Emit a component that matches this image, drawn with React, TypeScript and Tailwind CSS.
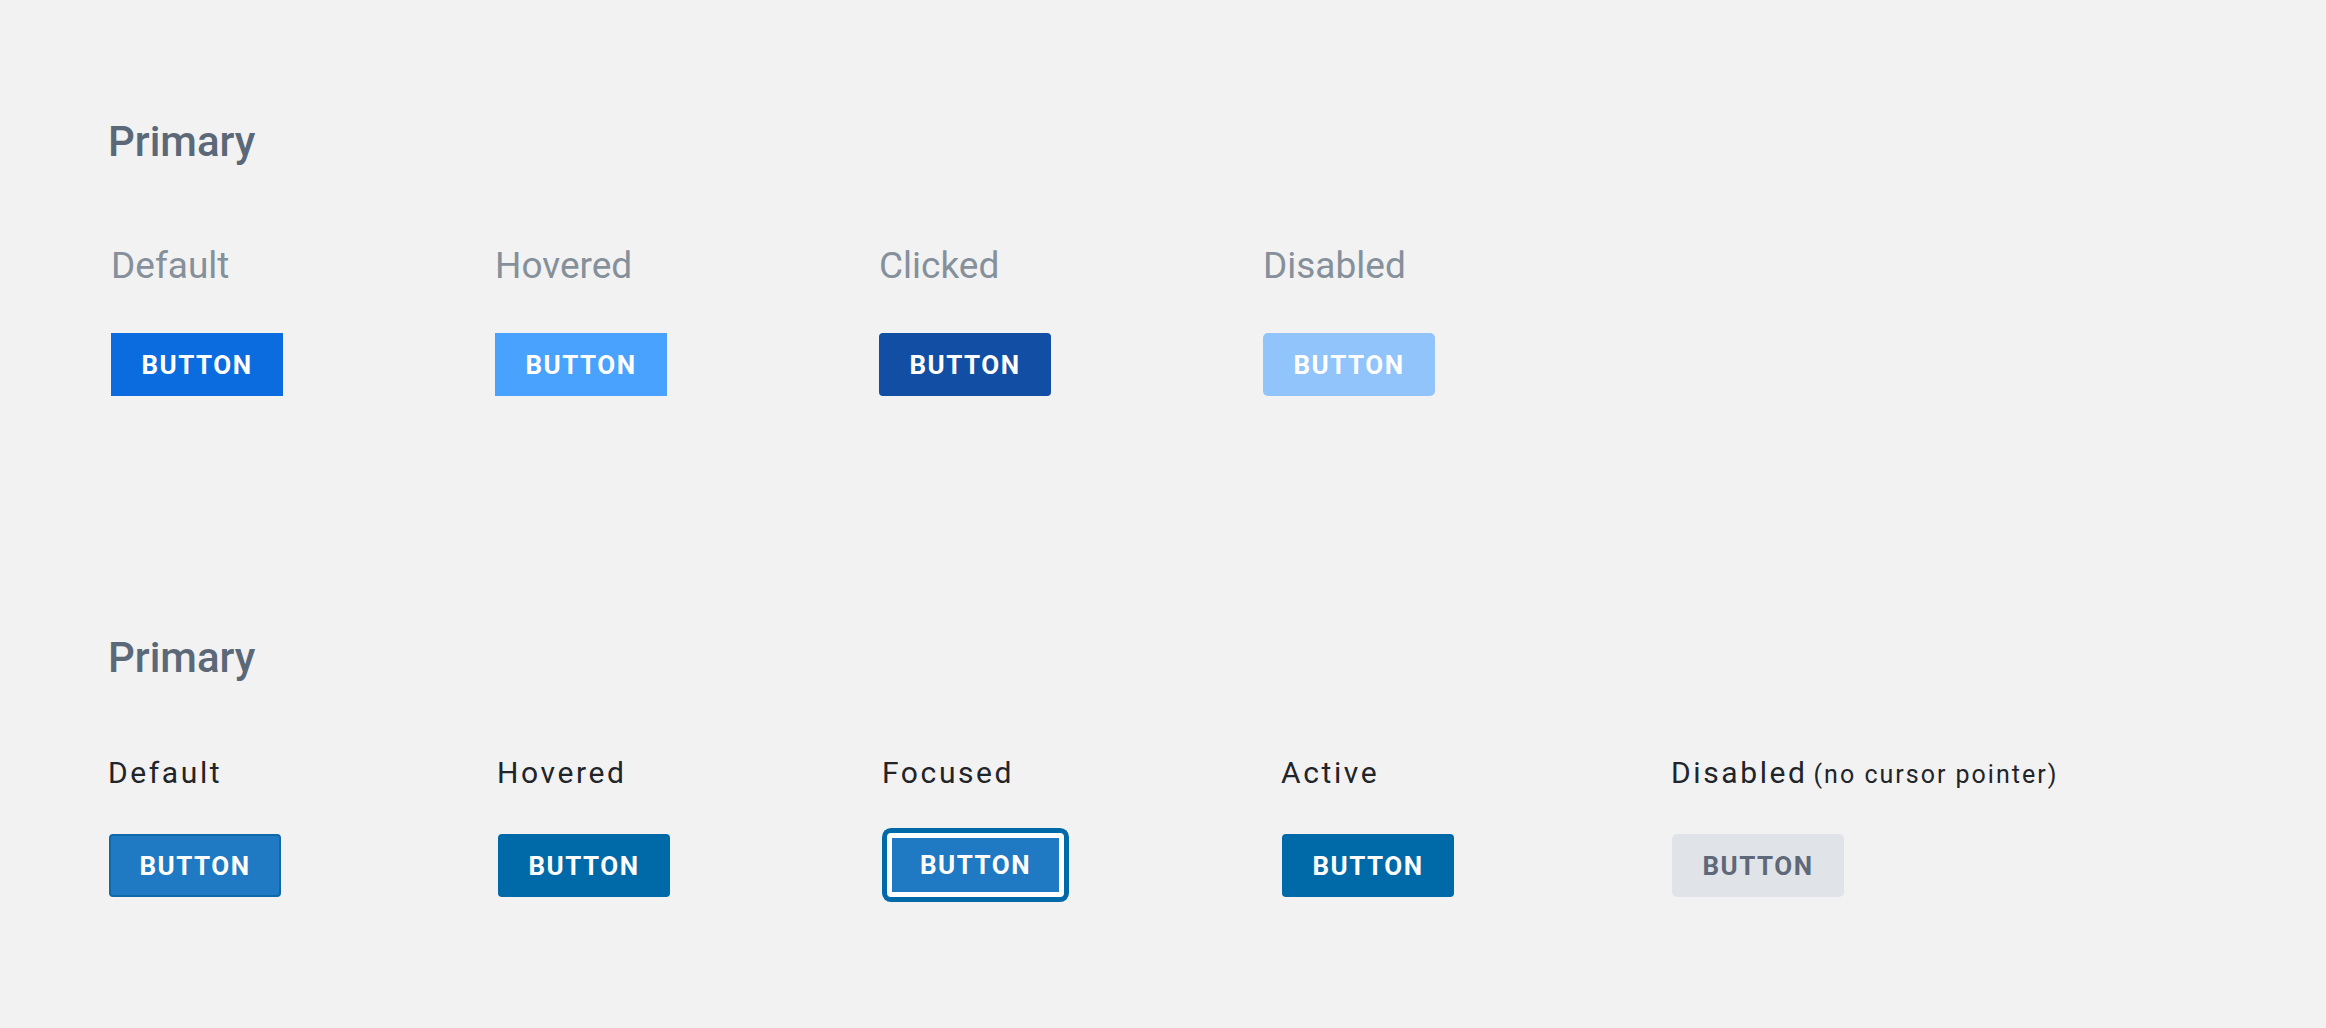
type Btn = {
  label: string;
  className: string;
};

const firstRow: Btn[] = [
  { label: "Default", className: "bg-[#0b6cdf] text-white" },
  { label: "Hovered", className: "bg-[#48a2fe] text-white" },
  { label: "Clicked", className: "rounded-[4px] bg-[#134ea5] text-white" },
  { label: "Disabled", className: "rounded-[5px] bg-[#90c4fb] text-white" },
];

function ButtonFace({ className }: { className: string }) {
  return (
    <div
      className={`flex items-center justify-center text-[26px] font-bold leading-none tracking-[1.5px] ${className}`}
    >
      BUTTON
    </div>
  );
}

export default function App() {
  return (
    <div className="min-h-screen bg-[#f2f2f2] pl-[108px] pt-[121px] font-['Roboto',sans-serif]">
      <h2 className="text-[42px] font-medium leading-none text-[#5b6878]">Primary</h2>

      <div className="mt-[84px] grid grid-cols-[384px_384px_384px_384px]">
        {firstRow.map((b) => (
          <div key={b.label} className="flex flex-col">
            <span className="ml-[3px] h-[36px] text-[37px] leading-none text-[#85909b]">{b.label}</span>
            <ButtonFace className={`ml-[3px] mt-[50px] h-[63px] w-[172px] ${b.className}`} />
          </div>
        ))}
      </div>

      <h2 className="mt-[241px] text-[42px] font-medium leading-none text-[#5b6878]">Primary</h2>

      <div className="mt-[79px] grid grid-cols-[389px_385px_399px_390px_auto] text-[30px] leading-none tracking-[2.6px] text-[#212429]">
        <div className="flex flex-col">
          <span>Default</span>
          <ButtonFace className="ml-px mt-[46px] h-[63px] w-[172px] rounded-[4px] border-2 border-[#0f68aa] bg-[#2079c3] text-white" />
        </div>
        <div className="flex flex-col">
          <span>Hovered</span>
          <ButtonFace className="ml-px mt-[46px] h-[63px] w-[172px] rounded-[4px] bg-[#0069a8] text-white" />
        </div>
        <div className="flex flex-col">
          <span>Focused</span>
          <ButtonFace className="ml-[5px] mt-[45px] h-[64px] w-[177px] rounded-[4px] border-[5px] border-white bg-[#2079c3] text-white ring-[5px] ring-[#0069a8]" />
        </div>
        <div className="flex flex-col">
          <span>Active</span>
          <ButtonFace className="ml-px mt-[46px] h-[63px] w-[172px] rounded-[4px] bg-[#0069a8] text-white" />
        </div>
        <div className="flex flex-col">
          <span>
            Disabled<span className="ml-[6px] text-[25px] tracking-[2px]">(no cursor pointer)</span>
          </span>
          <ButtonFace className="ml-px mt-[46px] h-[63px] w-[172px] rounded-[5px] bg-[#e0e3e8] text-[#5e6878]" />
        </div>
      </div>
    </div>
  );
}
